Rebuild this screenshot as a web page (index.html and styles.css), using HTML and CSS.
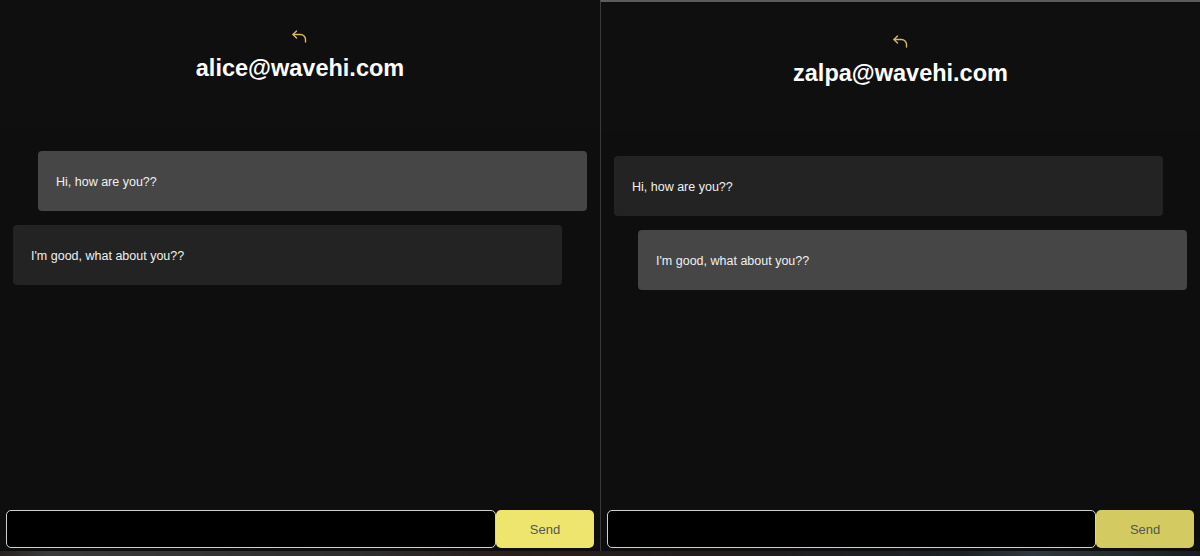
FILE: index.html
```html
<!DOCTYPE html>
<html lang="en">
<head>
<meta charset="utf-8">
<title>Chat</title>
<link rel="stylesheet" href="styles.css">
</head>
<body>
<div class="screen">
  <section class="chat chat-left">
    <header class="chat-header">
      <button class="back" aria-label="Back">
        <svg width="18" height="16" viewBox="0 0 18 16" fill="none" stroke="#d8b766" stroke-width="1.4" stroke-linecap="round" stroke-linejoin="round"><path d="M5.5 2 L2 5.5 L5.5 9"/><path d="M2 5.5 H9.5 A5 5 0 0 1 14.5 10.5 V13"/></svg>
      </button>
      <h1 class="title">alice@wavehi.com</h1>
    </header>
    <div class="messages">
      <div class="bubble sent">Hi, how are you??</div>
      <div class="bubble received">I'm good, what about you??</div>
    </div>
    <form class="composer">
      <input class="field" type="text" aria-label="Message">
      <button class="send" type="button">Send</button>
    </form>
  </section>
  <section class="chat chat-right">
    <header class="chat-header">
      <button class="back" aria-label="Back">
        <svg width="18" height="16" viewBox="0 0 18 16" fill="none" stroke="#d8b766" stroke-width="1.4" stroke-linecap="round" stroke-linejoin="round"><path d="M5.5 2 L2 5.5 L5.5 9"/><path d="M2 5.5 H9.5 A5 5 0 0 1 14.5 10.5 V13"/></svg>
      </button>
      <h1 class="title">zalpa@wavehi.com</h1>
    </header>
    <div class="messages">
      <div class="bubble received">Hi, how are you??</div>
      <div class="bubble sent">I'm good, what about you??</div>
    </div>
    <form class="composer">
      <input class="field" type="text" aria-label="Message">
      <button class="send send-dim" type="button">Send</button>
    </form>
  </section>
</div>
<div class="taskbar"></div>
</body>
</html>
```
FILE: styles.css
```css
* { box-sizing: border-box; }
html, body { margin: 0; padding: 0; }
body {
  width: 1200px;
  height: 556px;
  overflow: hidden;
  background: #0d0d0d;
  font-family: "Liberation Sans", Arial, sans-serif;
  color: #fff;
}
.screen {
  display: flex;
  height: 551px;
}
.chat {
  width: 600px;
  height: 551px;
  display: flex;
  flex-direction: column;
  background: #0e0e0e;
}
.chat-right {
  border-left: 1px solid #3a3a3a;
  border-top: 2px solid #5c5c5c;
  padding-top: 3px;
}
.chat-header {
  height: 128px;
  display: flex;
  flex-direction: column;
  align-items: center;
  padding-top: 29px;
  background: #0f0f0f;
}
.back {
  background: none;
  border: 0;
  padding: 0;
  width: 18px;
  height: 16px;
  display: block;
  cursor: pointer;
}
.back svg { display: block; }
.title {
  margin: 10px 0 0;
  font-size: 23.5px;
  font-weight: 700;
  line-height: 27px;
  color: #fff;
}
.messages {
  flex: 1;
  display: flex;
  flex-direction: column;
  gap: 14px;
  padding: 23px 13px 0;
}
.bubble {
  width: 549px;
  height: 60px;
  display: flex;
  align-items: center;
  padding: 2px 18px 0;
  font-size: 12.5px;
  color: #f0f0f0;
  border-radius: 4px;
}
.sent {
  align-self: flex-end;
  background: #464646;
}
.received {
  align-self: flex-start;
  background: #232323;
}
.composer {
  display: flex;
  padding: 0 6px 3px;
  margin: 0;
}
.field {
  width: 490px;
  height: 38px;
  background: #000;
  border: 1.5px solid #d0d0d0;
  border-radius: 5px;
  color: #fff;
  font-size: 14px;
  outline: none;
}
.send {
  width: 98px;
  height: 38px;
  border: 0;
  border-radius: 5px;
  background: #eee56e;
  color: #555;
  font-family: "Liberation Sans", Arial, sans-serif;
  font-size: 13px;
}
.send-dim { background: #d4ca62; }
.taskbar {
  height: 5px;
  background: linear-gradient(90deg, #2a2020 0%, #3a3a3a 4%, #2d2d2d 30%, #2a1e1e 40%, #221c1c 60%, #1b2126 80%, #2a3a40 86%, #1a1d20 100%);
}
```
